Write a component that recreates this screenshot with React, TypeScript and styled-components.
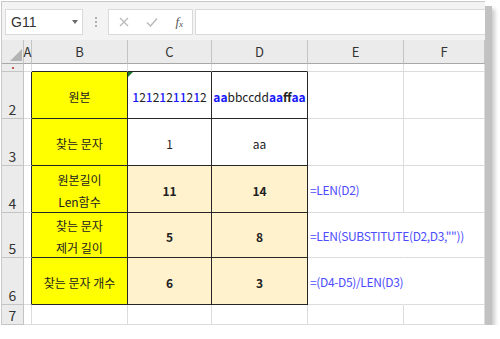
import React from "react";
import styled, { createGlobalStyle } from "styled-components";

const GlobalStyle = createGlobalStyle`
  html, body {
    margin: 0;
    padding: 0;
    background: #ffffff;
  }
  body {
    font-family: "Noto Sans CJK KR", "Noto Sans", sans-serif;
  }
`;

const colors = {
  yellow: "#ffff00",
  cream: "#fff2cc",
  blue: "#1a1aff",
  formula: "#4d4dff",
  grid: "#dcdcdc",
  dark: "#262626",
  header: "#ebebeb",
  headerLine: "#c4c4c4",
};

const COL_WIDTHS = [22, 8, 96, 84, 96, 96, 82];
const ROW_HEIGHTS = [24, 8, 47, 47, 47, 45, 47, 20];

type Seg = { t: string; blue?: boolean; bold?: boolean; medium?: boolean };

type CellData = {
  text?: string;
  segs?: Seg[];
  bg?: string;
  bold?: boolean;
  align?: "left" | "center";
  formula?: boolean;
  flag?: boolean;
  noRight?: boolean;
};

const rows: { num: string; cells: CellData[] }[] = [
  { num: "", cells: [{}, {}, {}, {}, {}, {}] },
  {
    num: "2",
    cells: [
      {},
      { text: "원본", bg: colors.yellow },
      {
        flag: true,
        segs: "12121211212"
          .split("")
          .map((c) => ({ t: c, blue: c === "1", medium: c === "1" })),
      },
      {
        segs: [
          { t: "aa", blue: true, bold: true },
          { t: "bbccdd" },
          { t: "aa", blue: true, bold: true },
          { t: "ff", bold: true },
          { t: "aa", blue: true, bold: true },
        ],
      },
      {},
      {},
    ],
  },
  {
    num: "3",
    cells: [{}, { text: "찾는 문자", bg: colors.yellow }, { text: "1" }, { text: "aa" }, {}, {}],
  },
  {
    num: "4",
    cells: [
      {},
      { text: "원본길이\nLen함수", bg: colors.yellow },
      { text: "11", bg: colors.cream, bold: true },
      { text: "14", bg: colors.cream, bold: true },
      { text: "=LEN(D2)", align: "left", formula: true },
      {},
    ],
  },
  {
    num: "5",
    cells: [
      {},
      { text: "찾는 문자\n제거 길이", bg: colors.yellow },
      { text: "5", bg: colors.cream, bold: true },
      { text: "8", bg: colors.cream, bold: true },
      { text: '=LEN(SUBSTITUTE(D2,D3,""))', align: "left", formula: true, noRight: true },
      {},
    ],
  },
  {
    num: "6",
    cells: [
      {},
      { text: "찾는 문자 개수", bg: colors.yellow },
      { text: "6", bg: colors.cream, bold: true },
      { text: "3", bg: colors.cream, bold: true },
      { text: "=(D4-D5)/LEN(D3)", align: "left", formula: true, noRight: true },
      {},
    ],
  },
  { num: "7", cells: [{}, {}, {}, {}, {}, {}] },
];

// rows index 1..5 (sheet rows 2..6), columns 1..3 (B..D) are the boxed table
const inBox = (r: number, c: number) => r >= 1 && r <= 5 && c >= 1 && c <= 3;

export default function App() {
  return (
    <>
      <GlobalStyle />
      <Window>
        <FormulaBar>
          <NameBox>
            <span>G11</span>
            <Caret />
          </NameBox>
          <Grip>
            <i />
            <i />
            <i />
          </Grip>
          <FxBox>
            <svg width="10" height="10" viewBox="0 0 10 10">
              <path d="M1 1 L9 9 M9 1 L1 9" stroke="#b9b9b9" strokeWidth="1.3" />
            </svg>
            <svg width="12" height="10" viewBox="0 0 12 10">
              <path d="M1 5.5 L4.5 9 L11 1.5" stroke="#b9b9b9" strokeWidth="1.4" fill="none" />
            </svg>
            <FxLabel>
              f<sub>x</sub>
            </FxLabel>
          </FxBox>
          <FormulaInput />
        </FormulaBar>

        <Sheet>
          <Corner>
            <svg width="12" height="12" viewBox="0 0 12 12">
              <path d="M12 0 L12 12 L0 12 Z" fill="#b4b4b4" />
            </svg>
          </Corner>
          {["A", "B", "C", "D", "E", "F"].map((c) => (
            <ColHeader key={c}>{c}</ColHeader>
          ))}

          {rows.map((row, r) => (
            <React.Fragment key={r}>
              <RowHeader $tiny={r === 0}>
                {r === 0 ? <Dot /> : row.num}
              </RowHeader>
              {row.cells.map((cell, c) => {
                const darkRight =
                  inBox(r, c) || (c === 0 && r >= 1 && r <= 5);
                const darkBottom =
                  inBox(r, c) || (r === 0 && c >= 1 && c <= 3);
                return (
                  <Cell
                    key={c}
                    $bg={cell.bg}
                    $bold={cell.bold}
                    $align={cell.align || "center"}
                    $formula={cell.formula}
                    $darkRight={darkRight}
                    $darkBottom={darkBottom}
                    $noRight={cell.noRight}
                  >
                    {cell.flag && <ErrorFlag />}
                    {cell.text &&
                      cell.text.split("\n").map((line, i) => (
                        <Line key={i}>{line}</Line>
                      ))}
                    {cell.segs && (
                      <Line>
                        {cell.segs.map((s, i) => (
                          <Seg
                            key={i}
                            $blue={s.blue}
                            $weight={s.bold ? 700 : s.medium ? 500 : 400}
                          >
                            {s.t}
                          </Seg>
                        ))}
                      </Line>
                    )}
                  </Cell>
                );
              })}
            </React.Fragment>
          ))}
        </Sheet>
      </Window>
    </>
  );
}

const Window = styled.div`
  margin: 1px 0 0 1px;
  width: 484px;
  height: 324px;
  box-sizing: border-box;
  border: 1px solid #c9c9c9;
  border-right: none;
  border-bottom: none;
  background: #ffffff;
  box-shadow: 7px 5px 0 #c2c2c2, 10px 8px 4px rgba(0, 0, 0, 0.2);
  display: flex;
  flex-direction: column;
  overflow: hidden;
`;

const FormulaBar = styled.div`
  height: 38px;
  flex: none;
  box-sizing: border-box;
  padding: 7px 0 5px 3px;
  background: #f3f3f3;
  display: flex;
  align-items: stretch;
`;

const NameBox = styled.div`
  width: 78px;
  box-sizing: border-box;
  background: #ffffff;
  border: 1px solid #dadada;
  display: flex;
  align-items: center;
  justify-content: space-between;
  padding: 0 4px 0 5px;
  font-family: "Liberation Sans", "Noto Sans", sans-serif;
  font-size: 14px;
  color: #333333;
`;

const Caret = styled.div`
  width: 0;
  height: 0;
  border-left: 3px solid transparent;
  border-right: 3px solid transparent;
  border-top: 4px solid #6a6a6a;
`;

const Grip = styled.div`
  width: 25px;
  display: flex;
  flex-direction: column;
  align-items: center;
  justify-content: center;
  gap: 2px;

  i {
    display: block;
    width: 2px;
    height: 2px;
    background: #b0b0b0;
  }
`;

const FxBox = styled.div`
  width: 85px;
  box-sizing: border-box;
  background: #ffffff;
  border: 1px solid #dadada;
  display: flex;
  align-items: center;
  justify-content: space-between;
  padding: 0 9px 0 10px;
`;

const FxLabel = styled.span`
  font-family: "Liberation Serif", "DejaVu Serif", serif;
  font-style: italic;
  font-size: 13px;
  color: #555555;

  sub {
    font-size: 9px;
    vertical-align: -1px;
  }
`;

const FormulaInput = styled.div`
  flex: 1;
  margin-left: 2px;
  background: #ffffff;
  border: 1px solid #dadada;
  border-right: none;
`;

const Sheet = styled.div`
  flex: 1;
  display: grid;
  grid-template-columns: ${COL_WIDTHS.map((w, i) => (i === COL_WIDTHS.length - 1 ? "1fr" : `${w}px`)).join(" ")};
  grid-template-rows: ${ROW_HEIGHTS.map((h, i) => (i === ROW_HEIGHTS.length - 1 ? "1fr" : `${h}px`)).join(" ")};
  font-size: 12px;
  color: #222222;
`;

const Corner = styled.div`
  background: ${colors.header};
  border-right: 1px solid ${colors.headerLine};
  border-bottom: 1px solid #a8a8a8;
  display: flex;
  align-items: flex-end;
  justify-content: flex-end;
  padding: 0 1px 2px 0;
`;

const ColHeader = styled.div`
  background: ${colors.header};
  border-right: 1px solid ${colors.headerLine};
  border-bottom: 1px solid #a8a8a8;
  display: flex;
  align-items: center;
  justify-content: center;
  font-size: 13px;
  color: #333333;
  overflow: visible;
  white-space: nowrap;
`;

const RowHeader = styled.div<{ $tiny?: boolean }>`
  background: ${colors.header};
  border-right: 1px solid ${colors.headerLine};
  border-bottom: 1px solid ${colors.headerLine};
  display: flex;
  align-items: ${(p) => (p.$tiny ? "center" : "flex-end")};
  justify-content: center;
  padding-bottom: ${(p) => (p.$tiny ? "0" : "1px")};
  font-size: 14px;
  line-height: 16px;
  color: #333333;
  overflow: hidden;
`;

const Dot = styled.span`
  width: 2px;
  height: 2px;
  background: #c25a5a;
`;

const Cell = styled.div<{
  $bg?: string;
  $bold?: boolean;
  $align: "left" | "center";
  $formula?: boolean;
  $darkRight?: boolean;
  $darkBottom?: boolean;
  $noRight?: boolean;
}>`
  position: relative;
  background: ${(p) => p.$bg || "transparent"};
  border-right: 1px solid
    ${(p) => (p.$darkRight ? colors.dark : p.$noRight ? "transparent" : colors.grid)};
  border-bottom: 1px solid ${(p) => (p.$darkBottom ? colors.dark : colors.grid)};
  display: flex;
  flex-direction: column;
  justify-content: center;
  align-items: ${(p) => (p.$align === "left" ? "flex-start" : "center")};
  padding: ${(p) => (p.$align === "left" ? "2px 0 0 2px" : "4px 0 0 0")};
  font-weight: ${(p) => (p.$bold ? 700 : 400)};
  color: ${(p) => (p.$formula ? colors.formula : "#222222")};
  letter-spacing: ${(p) => (p.$formula ? "-0.35px" : "0")};
  white-space: nowrap;
  overflow: visible;
  min-width: 0;
`;

const Line = styled.div`
  line-height: 22px;
`;

const Seg = styled.span<{ $blue?: boolean; $weight: number }>`
  color: ${(p) => (p.$blue ? colors.blue : "#222222")};
  font-weight: ${(p) => p.$weight};
`;

const ErrorFlag = styled.span`
  position: absolute;
  top: 0;
  left: 0;
  width: 0;
  height: 0;
  border-top: 5px solid #1e7b34;
  border-right: 5px solid transparent;
`;
